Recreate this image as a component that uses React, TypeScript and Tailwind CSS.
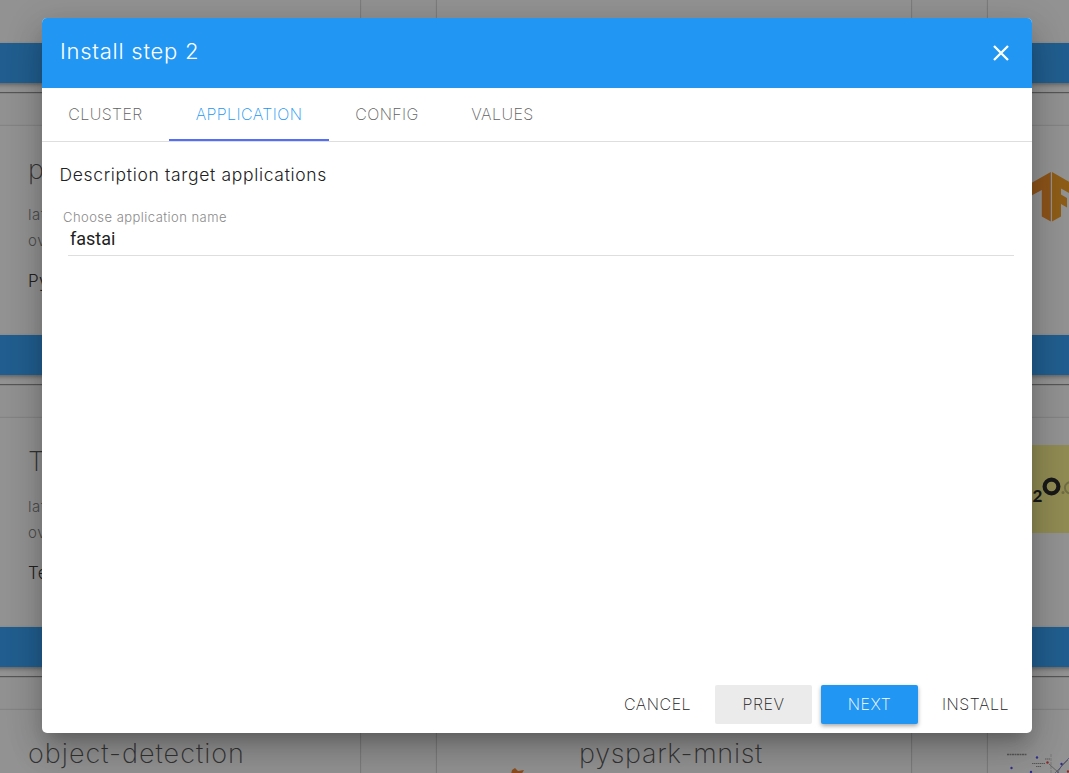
import React from "react";

const rows = [
  { title: "", meta1: "", meta2: "", desc: "", art: "none" },
  { title: "py", meta1: "lat", meta2: "ov", desc: "Py", art: "tf" },
  { title: "Te", meta1: "lat", meta2: "ov", desc: "Te", art: "h2o" },
  { title: "object-detection", meta1: "", meta2: "", desc: "", art: "chart" },
];

function TensorMark() {
  return (
    <svg width="88" height="88" viewBox="0 0 88 88">
      <path d="M44.800 19v49.500l-9-5V37L20 45.500V33z" fill="#ee8012" />
      <path d="M46 19l25 14.500v11l-16-9v6l6 3.500v9.500l-6-3.500v12.500l-9 5z" fill="#f09410" />
    </svg>
  );
}

function WaterMark() {
  return (
    <svg width="88" height="88" viewBox="0 0 88 88" className="bg-[#f5eb80]">
      <text x="26.500" y="56.500" fontSize="17" fontWeight="900" fill="#111" fontFamily="Lato, sans-serif">2</text>
      <circle cx="45.500" cy="41.500" r="6.900" fill="none" stroke="#111" strokeWidth="4.200" />
      <circle cx="57" cy="47.500" r="1.500" fill="#b9b065" />
      <path d="M66 37.500a5.500 5.500 0 1 0 0 10.500" fill="none" stroke="#b9b065" strokeWidth="2" />
    </svg>
  );
}

function NetworkChart() {
  return (
    <svg width="88" height="88" viewBox="0 0 88 88">
      <g transform="translate(0 -26)">
        <path d="M1 43.500h20" stroke="#888" strokeWidth="1.500" strokeDasharray="2 .5" />
        <path d="M26 52.500h13M30 55.500h5M39 48h5" stroke="#888" strokeWidth="1.200" strokeDasharray="1.500 .5" />
        <path d="M43 53l20 18M46 65l16-16" stroke="#777" strokeWidth=".7" />
        <path d="M46 71l10-17 8-8" stroke="#6a64c8" strokeWidth=".7" fill="none" />
        <path d="M45 43v22" stroke="#aaa" strokeWidth=".6" strokeDasharray="3 1" />
        <g fill="#4038f0">
          <circle cx="31" cy="46.500" r="1.200" />
          <circle cx="5.500" cy="57" r="1.200" />
          <circle cx="25" cy="61" r="1.200" />
          <circle cx="55.500" cy="53" r="1.200" />
        </g>
        <g fill="#f03030">
          <circle cx="41.500" cy="51.500" r="1.200" />
          <circle cx="62" cy="60.500" r="1.200" />
        </g>
      </g>
    </svg>
  );
}

function OrangeMark() {
  return (
    <svg width="88" height="88" viewBox="0 0 88 88">
      <path d="M55 42l2-9 3-2 3 3 6-1-4 7-2 8z" fill="#ee7420" />
    </svg>
  );
}

function Card({ title = "", meta1 = "", meta2 = "", desc = "", art = "none", tracking = "tracking-[1px]" }) {
  return (
    <div className="flex h-[258px] w-[474px] shrink-0 flex-col bg-[#fafafa] shadow-[0_1px_1px_rgba(0,0,0,0.4),0_0_2px_rgba(0,0,0,0.3)]">
      <div className="flex h-[209px] gap-[36px] px-[18px] pt-[27px]">
        <div className="h-[88px] w-[88px] shrink-0">
          {art === "tf" && <TensorMark />}
          {art === "h2o" && <WaterMark />}
          {art === "chart" && <NetworkChart />}
          {art === "orange" && <OrangeMark />}
        </div>
        <div className="text-[#757575]">
          <h2 className={"h-[48px] text-[27px] leading-[34px] font-extralight text-[#444] " + tracking}>{title}</h2>
          <p className="h-[26px] text-[15px] leading-[27px] tracking-[0.6px]">{meta1}</p>
          <p className="h-[26px] text-[15px] leading-[27px] tracking-[0.6px]">{meta2}</p>
          <p className="mt-[15px] text-[17px] leading-[27px] tracking-[0.3px] text-[#222]">{desc}</p>
        </div>
      </div>
      <div className="h-[40px] shrink-0 bg-[#2196f3] shadow-[0_2px_4px_rgba(0,0,0,0.35)]" />
    </div>
  );
}

function Backdrop() {
  return (
    <div className="-mt-[166px] -ml-[114px] flex w-[1600px] flex-col gap-[34px]">
      {rows.map((row, i) => (
        <div key={i} className="flex gap-[77px]">
          <Card title={row.title} meta1={row.meta1} meta2={row.meta2} desc={row.desc} />
          <Card title={i === 3 ? "pyspark-mnist" : ""} art={i === 3 ? "orange" : "none"} tracking="tracking-[0.7px]" />
          <Card art={row.art} />
        </div>
      ))}
    </div>
  );
}

const tabs = [
  { label: "CLUSTER", cell: "w-[127px]" },
  { label: "APPLICATION", cell: "w-[160px]" },
  { label: "CONFIG", cell: "w-[116px]" },
  { label: "VALUES", cell: "w-[115px]" },
];

export default function App() {
  return (
    <div className="relative h-[773px] w-full overflow-hidden bg-[#f7f7f7] font-light [font-family:Inter,'Liberation_Sans',sans-serif]">
      <Backdrop />
      <div className="absolute inset-0 bg-[#212121]/48 px-[42px] pt-[18px] pr-[37px]">
        <section className="flex h-[715px] w-[990px] flex-col overflow-hidden rounded-[5px] bg-white text-[#212121] shadow-[0_11px_15px_-7px_rgba(0,0,0,0.2),0_20px_34px_1px_rgba(0,0,0,0.14),0_8px_36px_4px_rgba(0,0,0,0.12)]">
          <header className="flex h-[70px] shrink-0 items-center justify-between bg-[#2196f3] pr-[22px] pl-[18px] text-white">
            <h1 className="-mt-[5px] text-[22px] leading-[28px] tracking-[0.75px]">Install step 2</h1>
            <svg width="18" height="18" viewBox="0 0 18 18" fill="none" stroke="white" strokeWidth="2.300">
              <path d="M2 2l14 14M16 2L2 16" />
            </svg>
          </header>
          <nav className="flex h-[54px] shrink-0 border-b border-[#dedede] text-[16px] font-extralight tracking-[0.4px] text-[#616161]">
            {tabs.map((t, i) => (
              <div key={t.label} className={"flex shrink-0 items-center justify-center border-b-2 pt-[1px] " + t.cell + (i === 1 ? " border-[#536dfe] text-[#2196f3]" : " border-transparent")}>
                {t.label}
              </div>
            ))}
          </nav>
          <main className="flex-1 pt-[20px] pr-[18px] pl-[17px]">
            <p className="pl-[0.5px] text-[17.5px] leading-[26px] tracking-[0.67px]">Description target applications</p>
            <label className="mt-[20px] block pl-[4px] text-[13px] leading-[18px] tracking-[0.46px] text-[#8a8a8a]">Choose application name</label>
            <div className="ml-[9px] h-[30px] border-b border-[#dedede] pl-[2px] text-[18px] leading-[26px] font-normal text-[#212121] [font-family:Roboto,sans-serif]">fastai</div>
          </main>
          <footer className="flex h-[48px] shrink-0 justify-end pr-[8px] text-[16px] leading-[24px] font-extralight tracking-[0.5px]">
            <div className="flex h-[39px] w-[97px] items-center justify-center pb-[2px]">CANCEL</div>
            <div className="ml-[9px] flex h-[39px] w-[97px] items-center justify-center rounded-[2px] bg-[#ebebeb] pb-[2px]">PREV</div>
            <div className="ml-[9px] flex h-[39px] w-[97px] items-center justify-center rounded-[2px] bg-[#2196f3] pb-[2px] text-white shadow-[0_2px_4px_rgba(0,0,0,0.35)]">NEXT</div>
            <div className="ml-[9px] flex h-[39px] w-[97px] items-center justify-center pb-[2px]">INSTALL</div>
          </footer>
        </section>
      </div>
    </div>
  );
}
